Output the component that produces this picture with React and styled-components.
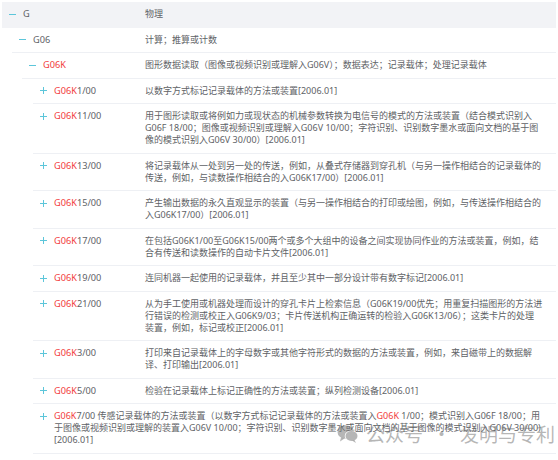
import styled, { createGlobalStyle } from "styled-components";

const GlobalStyle = createGlobalStyle`
  html, body { margin: 0; padding: 0; background: #fff; }
  body {
    font-family: "Noto Sans", "Noto Sans CJK SC", sans-serif;
    font-size: 9px;
    color: #606266;
  }
`;

const Page = styled.div`
  position: relative;
  width: 558px;
  height: 460px;
  padding: 2px 2px 0 2px;
  box-sizing: border-box;
  overflow: hidden;
`;

const Row = styled.div`
  display: flex;
  align-items: flex-start;
  margin-left: ${(p) => p.$indent}px;
  padding: 6px 13.5px 6.5px 7px;
  line-height: 12px;
  background: ${(p) => (p.$head ? "#f2f3f6" : "#fff")};
  border-bottom: 1px solid ${(p) => (p.$head ? "#f2f3f6" : "#eef0f4")};
`;

const Toggle = styled.span`
  flex: none;
  width: 7px;
  height: 12px;
  margin-right: 7px;
  display: flex;
  align-items: center;
  color: #5cc6da;
`;

const Label = styled.div`
  flex: none;
  width: ${(p) => p.$w}px;
  white-space: nowrap;
  font-size: 9.2px;
`;

const Red = styled.span`
  color: #f23c3c;
`;

const Desc = styled.div`
  flex: 1;
  min-width: 0;
`;

const Watermark = styled.div`
  position: absolute;
  left: 337px;
  top: 423px;
  display: flex;
  align-items: center;
  gap: 7px;
  color: rgba(110, 110, 110, 0.5);
  font-family: "Noto Sans CJK SC", sans-serif;
  font-size: 19px;
  line-height: 22px;
  pointer-events: none;
`;

const Dot = styled.span`
  margin: 0 2px;
`;

function ToggleIcon({ open }) {
  return (
    <Toggle>
      <svg width="7" height="7" viewBox="0 0 7 7">
        <path d="M0 3.5H7" stroke="currentColor" strokeWidth="1" />
        {!open && <path d="M3.5 0V7" stroke="currentColor" strokeWidth="1" />}
      </svg>
    </Toggle>
  );
}

const rows = [
  { level: 0, open: true, code: "G", desc: "物理", head: true },
  { level: 1, open: true, code: "G06", desc: "计算；推算或计数" },
  { level: 2, open: true, red: "G06K", desc: "图形数据读取（图像或视频识别或理解入G06V）；数据表达；记录载体；处理记录载体" },
  { level: 3, red: "G06K", code: "1/00", desc: "以数字方式标记记录载体的方法或装置[2006.01]" },
  { level: 3, red: "G06K", code: "11/00", desc: "用于图形读取或将例如力或现状态的机械参数转换为电信号的模式的方法或装置（结合模式识别入G06F 18/00；图像或视频识别或理解入G06V 10/00；字符识别、识别数字墨水或面向文档的基于图像的模式识别入G06V 30/00）[2006.01]" },
  { level: 3, red: "G06K", code: "13/00", desc: "将记录载体从一处到另一处的传送，例如，从叠式存储器到穿孔机（与另一操作相结合的记录载体的传送，例如，与读数操作相结合的入G06K17/00）[2006.01]" },
  { level: 3, red: "G06K", code: "15/00", desc: "产生输出数据的永久直观显示的装置（与另一操作相结合的打印或绘图，例如，与传送操作相结合的入G06K17/00）[2006.01]" },
  { level: 3, red: "G06K", code: "17/00", desc: "在包括G06K1/00至G06K15/00两个或多个大组中的设备之间实现协同作业的方法或装置，例如，结合有传送和读数操作的自动卡片文件[2006.01]" },
  { level: 3, red: "G06K", code: "19/00", desc: "连同机器一起使用的记录载体，并且至少其中一部分设计带有数字标记[2006.01]" },
  { level: 3, red: "G06K", code: "21/00", desc: "从为手工使用或机器处理而设计的穿孔卡片上检索信息（G06K19/00优先；用重复扫描图形的方法进行错误的检测或校正入G06K9/03；卡片传送机构正确运转的检验入G06K13/06）；这类卡片的处理装置，例如，标记或校正[2006.01]" },
  { level: 3, red: "G06K", code: "3/00", desc: "打印来自记录载体上的字母数字或其他字符形式的数据的方法或装置，例如，来自磁带上的数据解译、打印输出[2006.01]" },
  { level: 3, red: "G06K", code: "5/00", desc: "检验在记录载体上标记正确性的方法或装置；纵列检测设备[2006.01]" },
];

const indentOf = (level) => [0, 10, 20, 31][level];
const DESC_X = 143;

export default function App() {
  return (
    <>
      <GlobalStyle />
      <Page>
        {rows.map((r, i) => {
          const indent = indentOf(r.level);
          return (
            <Row key={i} $indent={indent} $head={r.head}>
              <ToggleIcon open={r.open} />
              <Label $w={DESC_X - indent - 21}>
                {r.red && <Red>{r.red}</Red>}
                {r.code}
              </Label>
              <Desc>{r.desc}</Desc>
            </Row>
          );
        })}
        <Row $indent={indentOf(3)}>
          <ToggleIcon />
          <Desc>
            <Red>G06K</Red>7/00 传感记录载体的方法或装置（以数字方式标记记录载体的方法或装置入
            <Red>G06K</Red> 1/00；模式识别入G06F 18/00；用于图像或视频识别或理解的装置入G06V 10/00；字符识别、识别数字墨水或面向文档的基于图像的模式识别入G06V 30/00)
            [2006.01]
          </Desc>
        </Row>
        <Watermark>
          <svg width="22" height="20" viewBox="0 0 22 20">
            <ellipse cx="8.5" cy="8" rx="8" ry="6.8" fill="currentColor" />
            <path d="M4 13.5 L3 17.5 L7.5 14.5 Z" fill="currentColor" />
            <ellipse cx="14.5" cy="12" rx="6.8" ry="5.6" fill="#fff" />
            <ellipse cx="14.5" cy="12" rx="6" ry="4.9" fill="currentColor" />
            <path d="M17.5 16 L19 19 L15 16.5 Z" fill="currentColor" />
          </svg>
          <span>公众号</span>
          <Dot>·</Dot>
          <span>发明与专利</span>
        </Watermark>
      </Page>
    </>
  );
}
